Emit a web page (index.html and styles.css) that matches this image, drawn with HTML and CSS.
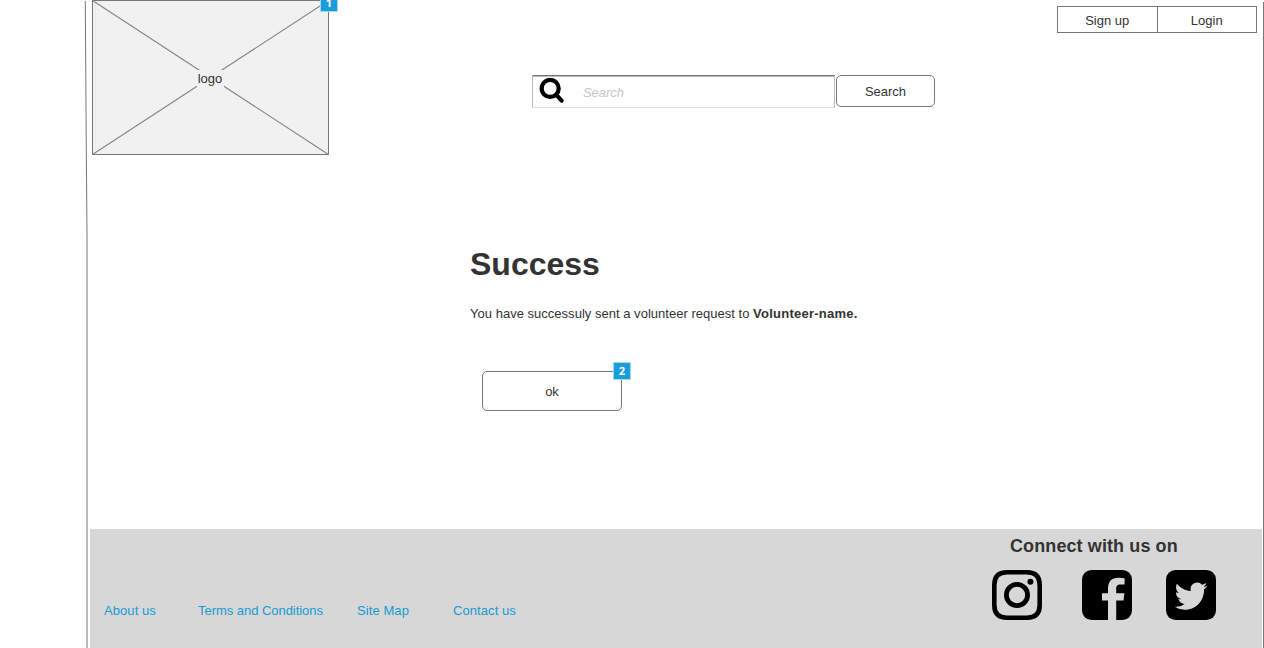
FILE: index.html
```html
<!DOCTYPE html>
<html lang="en">
<head>
<meta charset="utf-8">
<title>Success</title>
<link rel="stylesheet" href="styles.css">
</head>
<body>
<div class="page">
  <svg class="frame" viewBox="0 0 1264 648" aria-hidden="true">
    <path class="frame-left" d="M85.3 1L86.3 150L87 235V648"/>
    <path class="frame-right" d="M1263.5 2V648"/>
  </svg>
  <header class="header">
    <div class="logo">
      <svg class="cross" viewBox="0 0 237 155" aria-hidden="true"><path d="M.5 .5L236.5 154.5M.5 154.5L236.5 .5"/></svg>
      <span class="logo-label">logo</span>
      <span class="badge badge-logo">1</span>
    </div>
    <form class="search">
      <div class="field">
        <svg class="glass" viewBox="0 0 26 26" aria-hidden="true"><circle cx="11.2" cy="10.4" r="8.5"/><path d="M17.3 16.8L22.6 22.6"/></svg>
        <span class="hint">Search</span>
      </div>
      <button class="button search-button" type="button">Search</button>
    </form>
    <nav class="account"><a class="tab">Sign up</a><a class="tab">Login</a></nav>
  </header>
  <main class="main">
    <h1 class="title">Success</h1>
    <p class="message"><span class="plain">You have successuly sent a volunteer request to </span><b class="name">Volunteer-name.</b></p>
    <div class="confirm">
      <button class="button ok" type="button">ok</button>
      <span class="badge badge-ok">2</span>
    </div>
  </main>
  <footer class="footer">
    <nav class="links">
      <a class="link about">About us</a>
      <a class="link terms">Terms and Conditions</a>
      <a class="link map">Site Map</a>
      <a class="link contact">Contact us</a>
    </nav>
    <section class="connect">
      <h2 class="connect-title">Connect with us on</h2>
      <div class="socials">
        <svg class="social" viewBox="0 0 50 50" role="img" aria-label="Instagram">
          <path fill="none" stroke="#000" stroke-width="4.6" d="M15 2.3H35Q47.7 2.3 47.7 15V35Q47.7 47.7 35 47.7H15Q2.3 47.7 2.3 35V15Q2.3 2.3 15 2.3Z"/>
          <circle cx="25" cy="25" r="10.6" fill="none" stroke="#000" stroke-width="4.8"/>
          <circle cx="38.4" cy="11.7" r="3"/>
        </svg>
        <svg class="social facebook" viewBox="0 0 50 50" role="img" aria-label="Facebook">
          <rect width="50" height="50" rx="9.5"/>
          <path class="cutout" d="M26 50V30.5H20V23.3H26V19C26 11.5 29.5 7.8 36.5 7.8Q40 7.8 42.6 8.2V14.6H38.5C35 14.6 34.2 16.2 34.2 19V23.3H42.4L41.5 30.5H34.2V50Z"/>
        </svg>
        <svg class="social twitter" viewBox="0 0 50 50" role="img" aria-label="Twitter">
          <rect width="50" height="50" rx="9.5"/>
          <path class="cutout" transform="translate(8.7 9.4) scale(1.36 1.4)" d="M23.953 4.57a10 10 0 01-2.825.775 4.958 4.958 0 002.163-2.723c-.951.555-2.005.959-3.127 1.184a4.92 4.92 0 00-8.384 4.482C7.69 8.095 4.067 6.13 1.64 3.162a4.822 4.822 0 00-.666 2.475c0 1.71.87 3.213 2.188 4.096a4.904 4.904 0 01-2.228-.616v.06a4.923 4.923 0 003.946 4.827 4.996 4.996 0 01-2.212.085 4.936 4.936 0 004.604 3.417 9.867 9.867 0 01-6.102 2.105c-.39 0-.779-.023-1.17-.067a13.995 13.995 0 007.557 2.209c9.053 0 13.998-7.496 13.998-13.985 0-.21 0-.42-.015-.63A9.935 9.935 0 0024 4.59z"/>
        </svg>
      </div>
    </section>
  </footer>
</div>
</body>
</html>
```
FILE: styles.css
```css
* { box-sizing: border-box; }
body { margin: 0; background: #fff; color: #333; font: 13px/16px "Liberation Sans", Arial, sans-serif; }
.page { position: relative; width: 1264px; height: 648px; padding: 0 2px 0 90px; overflow: hidden; display: flex; flex-direction: column; }
.frame { position: absolute; inset: 0; width: 1264px; height: 648px; pointer-events: none; fill: none; stroke: #777; stroke-width: 1; }
.header { height: 155px; padding: 0 5px 0 2px; display: flex; align-items: flex-start; }
.logo { position: relative; width: 237px; height: 155px; border: 1px solid #777; background: #f1f1f1; display: flex; align-items: center; justify-content: center; }
.cross { position: absolute; left: -1px; top: -1px; width: 237px; height: 155px; fill: none; stroke: #888; stroke-width: 1.2; }
.logo-label { position: relative; padding: 1px 2px 0 1px; margin-top: 1px; background: #f1f1f1; }
.badge { position: absolute; width: 18px; height: 18px; border: 1px solid #a3daf3; background: #1b9ddb; color: #fff; font: bold 11px/16px "Open Sans", sans-serif; text-align: center; }
.badge-logo { left: 227px; top: -7px; }
.search { display: flex; align-items: flex-start; gap: 1px; margin: 75px 0 0 203px; }
.field { width: 303px; height: 33px; border: 1px solid #bbb; border-top: 1px solid #777; border-bottom-color: #ddd; box-shadow: inset 0 1px #bbb; padding: 1px 0 0 6px; display: flex; align-items: flex-start; }
.glass { width: 26px; height: 26px; margin-top: 1px; fill: none; stroke: #000; stroke-width: 4.2; stroke-linecap: round; }
.hint { margin: 8px 0 0 18px; color: #c6c6c6; font-style: italic; letter-spacing: -.05px; }
.button { padding: 1px 0 0; background: #fff; border: 1px solid #777; border-radius: 5px; color: #333; font: inherit; line-height: 17px; }
.search-button { width: 99px; height: 32px; }
.account { display: flex; width: 200px; height: 27px; margin: 6px 0 0 auto; border: 1px solid #777; }
.tab { flex: 1; text-align: center; line-height: 27px; }
.tab + .tab { border-left: 1px solid #777; }
.main { flex: 1; padding: 91px 0 0 380px; }
.title { margin: 0; font-size: 32px; line-height: 36px; }
.message { margin: 24px 0 0; line-height: 16px; white-space: pre; }
.plain { letter-spacing: .02px; }
.name { letter-spacing: .25px; }
.confirm { position: relative; width: 140px; height: 40px; margin: 49px 0 0 12px; }
.ok { width: 140px; height: 40px; }
.badge-ok { left: 131px; top: -9px; }
.footer { height: 119px; width: 1172px; background: #d7d7d7; display: flex; justify-content: space-between; }
.links { display: flex; padding: 74px 0 0 14px; white-space: nowrap; }
.link { color: #169bd5; letter-spacing: .08px; }
.about { width: 94px; }
.terms { width: 159px; letter-spacing: -.04px; }
.map { width: 96px; }
.connect { width: 270px; padding-top: 6px; }
.connect-title { margin: 0 0 0 18px; font-size: 18px; line-height: 22px; letter-spacing: .1px; }
.socials { display: flex; margin-top: 13px; }
.social { width: 50px; height: 50px; }
.facebook { margin-left: 40px; }
.twitter { margin-left: 34px; }
.cutout { fill: #d7d7d7; }
```
